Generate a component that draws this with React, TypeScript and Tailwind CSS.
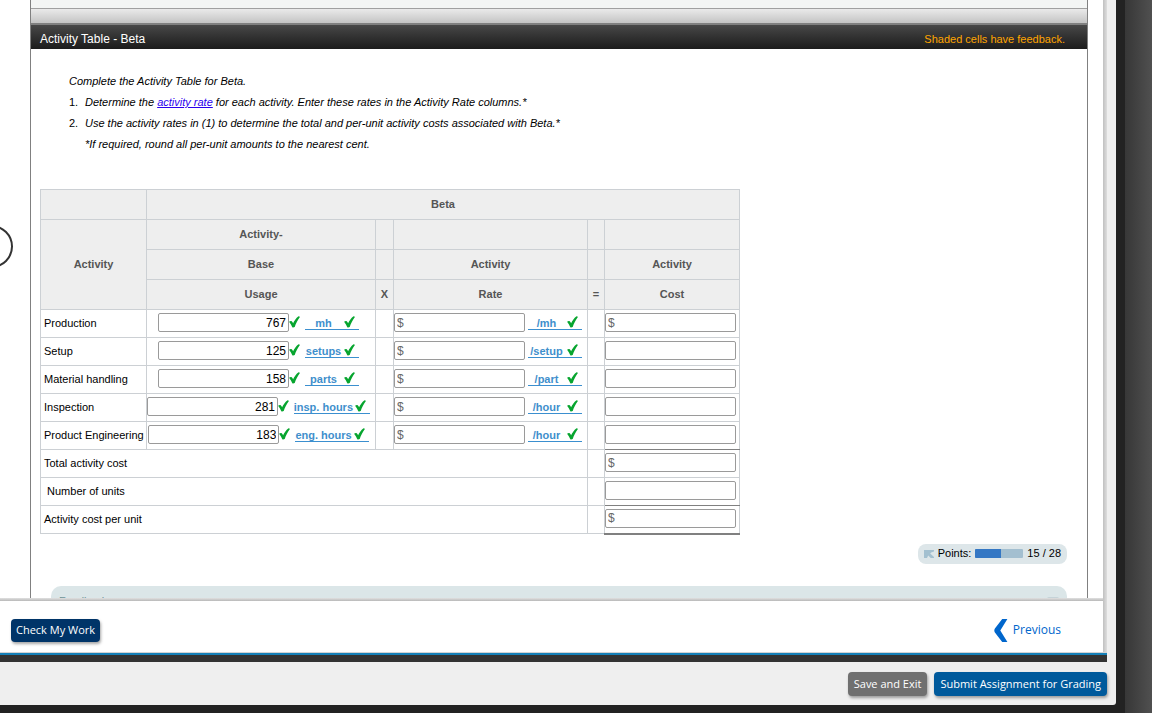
import React from 'react';

type Row = {
  name: string;
  usage: string;
  unit: string;
  rateUnit: string;
  costSign: boolean;
  costEdge?: string;
};

const rows: Row[] = [
  { name: 'Production', usage: '767', unit: 'mh', rateUnit: '/mh', costSign: true },
  { name: 'Setup', usage: '125', unit: 'setups', rateUnit: '/setup', costSign: false },
  { name: 'Material handling', usage: '158', unit: 'parts', rateUnit: '/part', costSign: false },
  { name: 'Inspection', usage: '281', unit: 'insp. hours', rateUnit: '/hour', costSign: false },
  {
    name: 'Product Engineering',
    usage: '183',
    unit: 'eng. hours',
    rateUnit: '/hour',
    costSign: false,
    costEdge: 'border-b-[#808080]',
  },
];

const totals = [
  { name: 'Total activity cost', sign: true, edge: 'border-t-[#808080]' },
  { name: '\u00a0Number of units', sign: false, edge: 'border-b-[#808080]' },
  {
    name: 'Activity cost per unit',
    sign: true,
    edge: 'border-t-[#808080] border-b-2 border-b-[#808080]',
  },
];

function Check() {
  return (
    <svg viewBox="0 0 11 12" className="h-3 w-[11px] shrink-0" aria-label="Correct" role="img">
      <path
        d="M0.1 5.8 Q1.3 4.6 2.4 5 Q3.6 5.8 4.1 7.3 C5.4 4.4 7.2 2 9.2 0.4 Q10.2 -0.1 10.9 0.9 C8.8 3.6 6.9 7.2 5.7 11 Q4.5 11.8 3.3 11.3 C2.6 9.3 1.5 7.7 0.1 5.8 Z"
        fill="#07a52f"
      />
    </svg>
  );
}

function Field({ label, value, sign }: { label: string; value?: string; sign?: boolean }) {
  return (
    <input
      type="text"
      aria-label={label}
      defaultValue={value}
      placeholder={sign ? '$' : undefined}
      className={
        'block h-[19px] w-[131px] shrink-0 rounded-[2px] border border-[#9a9a9a] bg-white px-[2px] text-xs leading-4 text-black placeholder:text-[#666] ' +
        (value ? 'text-right' : 'text-left')
      }
    />
  );
}

function Unit({ text }: { text: string }) {
  return (
    <a
      href="#unit"
      className="flex h-[15px] min-w-[54px] shrink-0 items-end gap-[2px] border-b border-[#3b8fcf] pr-1 font-bold text-[#3f8fcc]"
    >
      <span className="flex-1 whitespace-nowrap text-center leading-3">{text}</span>
      <span className="flex self-center">
        <Check />
      </span>
    </a>
  );
}

const th =
  'h-[30px] border border-[#ccd0d4] bg-[#eee] p-0 pb-[2px] text-center font-bold text-[#555]';
const td = 'h-7 border border-[#ccd0d4] p-0 pb-[2px]';

export default function App() {
  return (
    <div className="flex h-screen overflow-hidden bg-[#222] font-['Liberation_Sans',Arial,sans-serif] text-[11px] text-black">
      <div className="flex min-w-0 flex-1 flex-col pb-2">
        <div className="flex min-h-0 flex-1 flex-col rounded-br-[3px] bg-[#efefef] pr-[9px]">
          <div className="flex min-h-0 flex-1">
            <div className="relative flex min-w-0 flex-1 flex-col overflow-hidden bg-white">
              <main className="min-h-0 flex-1 overflow-hidden pl-[30px] pr-[15px]">
                <div className="border-x border-[#808080] pb-40">
                  <div className="h-2 bg-[#f3f5f4]" />
                  <div className="h-[15px] border-t border-[#a0a0a0] bg-linear-to-b from-[#eaeaea] to-[#c4c4c4]" />
                  <header className="flex h-[26px] items-end justify-between border-t-2 border-[#808080] bg-linear-to-b from-[#484848] to-[#1c1c1c] pb-[2px] pl-[9px] pr-[22px] leading-4">
                    <h1 className="text-xs leading-4 text-white">Activity Table - Beta</h1>
                    <span className="text-[#ffa500]">Shaded cells have feedback.</span>
                  </header>

                  <section className="pl-[38px] pt-[22px] italic leading-[21px]">
                    <p>Complete the Activity Table for Beta.</p>
                    <ol>
                      <li className="flex">
                        <span className="w-4 not-italic">1.</span>
                        <p>
                          Determine the{' '}
                          <a href="#activity-rate" className="text-[#2a00ee] underline">
                            activity rate
                          </a>{' '}
                          for each activity. Enter these rates in the Activity Rate columns.*
                        </p>
                      </li>
                      <li className="flex">
                        <span className="w-4 not-italic">2.</span>
                        <p>
                          Use the activity rates in (1) to determine the total and per-unit activity
                          costs associated with Beta.*
                          <br />
                          *If required, round all per-unit amounts to the nearest cent.
                        </p>
                      </li>
                    </ol>
                  </section>

                  <table className="ml-[9px] mt-[34px] w-[700px] table-fixed border-collapse leading-4">
                    <colgroup>
                      <col className="w-[106px]" />
                      <col className="w-[229px]" />
                      <col className="w-[18px]" />
                      <col className="w-[194px]" />
                      <col className="w-[17px]" />
                      <col className="w-[135px]" />
                    </colgroup>
                    <thead>
                      <tr>
                        <th className={th} />
                        <th className={th} colSpan={5}>
                          Beta
                        </th>
                      </tr>
                      <tr>
                        <th className={th} rowSpan={3}>
                          Activity
                        </th>
                        <th className={th}>Activity-</th>
                        <th className={th} />
                        <th className={th} />
                        <th className={th} />
                        <th className={th} />
                      </tr>
                      <tr>
                        <th className={th}>Base</th>
                        <th className={th} />
                        <th className={th}>Activity</th>
                        <th className={th} />
                        <th className={th}>Activity</th>
                      </tr>
                      <tr>
                        <th className={th}>Usage</th>
                        <th className={th}>X</th>
                        <th className={th}>Rate</th>
                        <th className={th}>=</th>
                        <th className={th}>Cost</th>
                      </tr>
                    </thead>
                    <tbody>
                      {rows.map((row) => (
                        <tr key={row.name}>
                          <td className={td + ' whitespace-nowrap'}>
                            <div className="pl-[3px]">{row.name}</div>
                          </td>
                          <td className={td}>
                            <div className="flex items-center justify-center pr-[5px]">
                              <Field label={row.name + ' usage'} value={row.usage} />
                              <span className="mr-1 flex h-[13px] w-3">
                                <Check />
                              </span>
                              <Unit text={row.unit} />
                            </div>
                          </td>
                          <td className={td} />
                          <td className={td}>
                            <div className="flex items-center gap-[3px]">
                              <Field label={row.name + ' rate'} sign />
                              <Unit text={row.rateUnit} />
                            </div>
                          </td>
                          <td className={td} />
                          <td className={td + ' ' + (row.costEdge ?? '')}>
                            <Field label={row.name + ' cost'} sign={row.costSign} />
                          </td>
                        </tr>
                      ))}
                      {totals.map((row) => (
                        <tr key={row.name}>
                          <td className={td} colSpan={4}>
                            <div className="pl-[3px]">{row.name}</div>
                          </td>
                          <td className={td} />
                          <td className={td + ' ' + row.edge}>
                            <Field label={row.name.trim()} sign={row.sign} />
                          </td>
                        </tr>
                      ))}
                    </tbody>
                  </table>

                  <div className="mt-[9px] flex justify-end pr-5">
                    <div className="flex h-5 items-center rounded-lg bg-[#dde6e9] px-[6px] leading-4">
                      <svg viewBox="0 0 10 8" className="mr-1 h-2 w-[10px]" aria-hidden="true">
                        <path
                          d="M0 0H10V1.4L7.2 2.4L6.2 3.6L10 7V8H6.8L4.2 5.4L3 8H0Z"
                          fill="#a3c0d0"
                        />
                      </svg>
                      <span className="pb-[2px]">Points:</span>
                      <span className="mx-1 flex h-[9px] w-12 overflow-hidden rounded-[1px] bg-[#a3bfd0]">
                        <span className="w-[54%] bg-[#3477c4]" />
                      </span>
                      <span className="pb-[2px]">15 / 28</span>
                    </div>
                  </div>

                  <div className="mx-5 mt-[22px] flex h-8 items-start justify-between rounded-[10px] bg-[#dbe6e8] px-2 pt-[7px] leading-4 text-[#6f9498]">
                    <span>Feedback</span>
                    <svg viewBox="0 0 12 12" className="mt-1 h-3 w-3" aria-hidden="true">
                      <path d="M2 0h8a2 2 0 0 1 2 2v8H0V2a2 2 0 0 1 2-2Z" fill="#c5d3d8" />
                    </svg>
                  </div>
                </div>
              </main>

              <button
                type="button"
                aria-label="Previous item"
                className="absolute -left-[30px] top-[225px] h-[43px] w-[43px] rounded-full border-2 border-[#333] bg-white"
              />

              <div className="h-[3px] shrink-0 bg-linear-to-b from-[#e0e0e0] to-[#b8b8b8]" />
              <nav className="flex h-[51px] shrink-0 items-center justify-between bg-white pl-[11px] pr-[42px] pt-[7px] font-['Open_Sans',sans-serif]">
                <button
                  type="button"
                  className="h-[23px] rounded bg-[#003468] px-[5px] text-[11px] font-medium leading-4 text-white shadow-[1px_2px_3px_rgba(0,0,0,0.35)]"
                >
                  Check My Work
                </button>
                <a href="#previous" className="flex items-center gap-[5px] text-xs text-[#0066cc]">
                  <svg viewBox="0 0 14 23" className="h-[23px] w-[14px]" aria-hidden="true">
                    <path
                      d="M8.2 0H13.4C11.2 3.7 8.5 7.6 6.3 11.5C8.5 15.4 11.2 19.3 13.4 23H8.2L0.9 13.6Q-0.3 11.5 0.9 9.4Z"
                      fill="#0066cc"
                    />
                  </svg>
                  Previous
                </a>
              </nav>
            </div>
            <div className="w-1 shrink-0 bg-linear-to-r from-[#c0c0c0] to-[#dedede]" />
          </div>
          <div className="h-[10px] shrink-0 border-t border-[#d4d4d4] bg-[#333]">
            <div className="h-[2px] bg-[#1580b8]" />
          </div>
          <footer className="flex h-[43px] shrink-0 items-center justify-end gap-[7px] font-['Open_Sans',sans-serif]">
            <button
              type="button"
              className="h-6 rounded bg-[#707070] px-[6px] text-[11px] font-medium leading-4 text-white shadow-[1px_2px_3px_rgba(0,0,0,0.35)]"
            >
              Save and Exit
            </button>
            <button
              type="button"
              className="h-6 rounded bg-[#005a9c] px-[6px] text-[11px] font-medium leading-4 text-white shadow-[1px_2px_3px_rgba(0,0,0,0.35)]"
            >
              Submit Assignment for Grading
            </button>
          </footer>
        </div>
      </div>
      <div className="w-[9px] shrink-0" />
      <div className="w-[27px] shrink-0 bg-linear-to-r from-[#373737] to-[#505050]" />
    </div>
  );
}
